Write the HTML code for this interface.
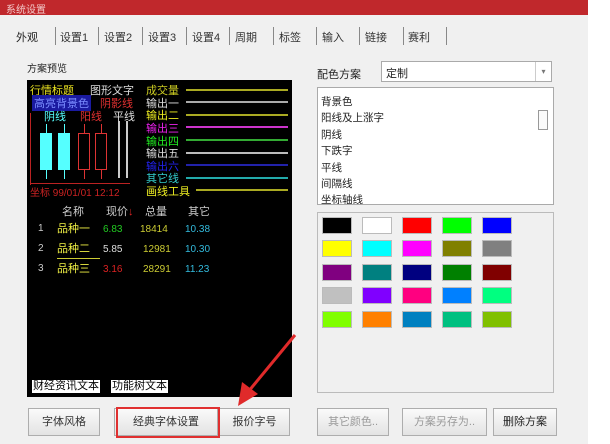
<!DOCTYPE html>
<html><head><meta charset="utf-8"><style>
*{margin:0;padding:0;box-sizing:border-box}
body{width:610px;height:444px;background:#fff;font-family:"Liberation Sans","Noto Sans CJK SC",sans-serif;font-size:11px;position:relative;overflow:hidden;color:#222}
.a{position:absolute;white-space:nowrap}
.win{position:absolute;left:0;top:0;width:588px;height:444px;background:#f0f0f0}
.title{position:absolute;left:0;top:0;width:588px;height:15px;background:#c0282c;color:#f2c8c8;font-size:10px;padding:1px 6px}
.tab{position:absolute;top:29px;font-size:11px;color:#333}
.sep{position:absolute;top:27px;width:1px;height:18px;background:#888}
.blk{position:absolute;left:27px;top:80px;width:265px;height:317px;background:#000}
.btn{position:absolute;height:28px;border:1px solid #adadad;background:linear-gradient(#fafafa,#e3e3e3);text-align:center;line-height:26px;font-size:11px;color:#333}
.sw{position:absolute;width:30px;height:17px;border:1px solid #bbb}
.ln{position:absolute;height:2px}
</style></head><body>
<div class="win"></div>
<div class="title">系统设置</div>
<div class="tab" style="left:16px;color:#222">外观</div>
<div class="sep" style="left:55px"></div><div class="tab" style="left:60px">设置1</div>
<div class="sep" style="left:98px"></div><div class="tab" style="left:104px">设置2</div>
<div class="sep" style="left:142px"></div><div class="tab" style="left:148px">设置3</div>
<div class="sep" style="left:186px"></div><div class="tab" style="left:192px">设置4</div>
<div class="sep" style="left:229px"></div><div class="tab" style="left:235px">周期</div>
<div class="sep" style="left:273px"></div><div class="tab" style="left:279px">标签</div>
<div class="sep" style="left:316px"></div><div class="tab" style="left:322px">输入</div>
<div class="sep" style="left:359px"></div><div class="tab" style="left:365px">链接</div>
<div class="sep" style="left:403px"></div><div class="tab" style="left:408px">赛利</div>
<div class="sep" style="left:446px"></div>
<div class="a" style="left:27px;top:60px;font-size:10px">方案预览</div>
<div class="blk"></div>
<div class="a" style="left:30px;top:82px;color:#e8e020;font-size:11px">行情标题</div>
<div class="a" style="left:90px;top:82px;color:#ddd;font-size:11px">图形文字</div>
<div class="a" style="left:32px;top:95px;color:#7a8cff;background:#1a1aa0;font-size:11px;padding:0 2px">高亮背景色</div>
<div class="a" style="left:100px;top:95px;color:#e03030;font-size:11px">阴影线</div>
<div class="a" style="left:44px;top:108px;color:#5ff;font-size:11px">阴线</div>
<div class="a" style="left:80px;top:108px;color:#e03030;font-size:11px">阳线</div>
<div class="a" style="left:113px;top:108px;color:#ddd;font-size:11px">平线</div>
<div class="a" style="left:30px;top:113px;width:1px;height:72px;background:#b22"></div>
<div class="a" style="left:30px;top:183px;width:100px;height:1px;background:#b22"></div>
<div class="a" style="left:46px;top:124px;width:1px;height:55px;background:#5ff"></div>
<div class="a" style="left:40px;top:133px;width:12px;height:37px;background:#5ff"></div>
<div class="a" style="left:64px;top:124px;width:1px;height:55px;background:#5ff"></div>
<div class="a" style="left:58px;top:133px;width:12px;height:37px;background:#5ff"></div>
<div class="a" style="left:84px;top:124px;width:1px;height:55px;background:#d33"></div>
<div class="a" style="left:78px;top:133px;width:12px;height:37px;border:1px solid #d33;background:#000"></div>
<div class="a" style="left:101px;top:124px;width:1px;height:55px;background:#d33"></div>
<div class="a" style="left:95px;top:133px;width:12px;height:37px;border:1px solid #d33;background:#000"></div>
<div class="a" style="left:118px;top:121px;width:2px;height:57px;background:#ccc"></div>
<div class="a" style="left:126px;top:121px;width:2px;height:57px;background:#ccc"></div>
<div class="a" style="left:30px;top:184px;color:#c22;font-size:10px">坐标 99/01/01 12:12</div>
<div class="a" style="left:146px;top:82px;color:#cc2;font-size:11px">成交量</div><div class="ln" style="left:186px;top:89px;width:102px;background:#aa2"></div>
<div class="a" style="left:146px;top:95px;color:#ddd;font-size:11px">输出一</div><div class="ln" style="left:186px;top:101px;width:102px;background:#aaa"></div>
<div class="a" style="left:146px;top:107px;color:#ee2;font-size:11px">输出二</div><div class="ln" style="left:186px;top:114px;width:102px;background:#aa2"></div>
<div class="a" style="left:146px;top:120px;color:#e2e;font-size:11px">输出三</div><div class="ln" style="left:186px;top:126px;width:102px;background:#c3c"></div>
<div class="a" style="left:146px;top:133px;color:#2e2;font-size:11px">输出四</div><div class="ln" style="left:186px;top:139px;width:102px;background:#3a3"></div>
<div class="a" style="left:146px;top:145px;color:#ddd;font-size:11px">输出五</div><div class="ln" style="left:186px;top:152px;width:102px;background:#bbb"></div>
<div class="a" style="left:146px;top:158px;color:#22e;font-size:11px">输出六</div><div class="ln" style="left:186px;top:164px;width:102px;background:#22a"></div>
<div class="a" style="left:146px;top:170px;color:#3cc;font-size:11px">其它线</div><div class="ln" style="left:186px;top:177px;width:102px;background:#2aa"></div>
<div class="a" style="left:146px;top:183px;color:#ee2;font-size:11px">画线工具</div><div class="ln" style="left:196px;top:189px;width:92px;background:#aa2"></div>
<div class="a" style="left:62px;top:203px;color:#ccc;font-size:11px">名称</div>
<div class="a" style="left:106px;top:203px;color:#ccc;font-size:11px">现价<span style="color:#d22">↓</span></div>
<div class="a" style="left:145px;top:203px;color:#ccc;font-size:11px">总量</div>
<div class="a" style="left:188px;top:203px;color:#ccc;font-size:11px">其它</div>
<div class="a" style="left:38px;top:223px;color:#ccc;font-size:10px">1</div><div class="a" style="left:57px;top:220px;color:#ee4;font-size:11px">品种一</div><div class="a" style="left:103px;top:224px;color:#2c2;font-size:10px">6.83</div><div class="a" style="left:140px;top:224px;color:#cc3;font-size:10px">18414</div><div class="a" style="left:185px;top:224px;color:#3bd;font-size:10px">10.38</div>
<div class="a" style="left:38px;top:243px;color:#ccc;font-size:10px">2</div><div class="a" style="left:57px;top:240px;color:#ee4;font-size:11px">品种二</div><div class="a" style="left:103px;top:244px;color:#ddd;font-size:10px">5.85</div><div class="a" style="left:143px;top:244px;color:#cc3;font-size:10px">12981</div><div class="a" style="left:185px;top:244px;color:#3bd;font-size:10px">10.30</div>
<div class="a" style="left:57px;top:258px;width:43px;height:1px;background:#cc3"></div>
<div class="a" style="left:38px;top:263px;color:#ccc;font-size:10px">3</div><div class="a" style="left:57px;top:260px;color:#ee4;font-size:11px">品种三</div><div class="a" style="left:103px;top:264px;color:#d22;font-size:10px">3.16</div><div class="a" style="left:143px;top:264px;color:#cc3;font-size:10px">28291</div><div class="a" style="left:185px;top:264px;color:#3bd;font-size:10px">11.23</div>
<div class="a" style="left:32px;top:380px;background:#fff;color:#000;font-size:11px;padding:0 1px;line-height:13px">财经资讯文本</div>
<div class="a" style="left:111px;top:380px;background:#fff;color:#000;font-size:11px;padding:0 1px;line-height:13px">功能树文本</div>
<div class="btn" style="left:28px;top:408px;width:72px">字体风格</div>
<div class="btn" style="left:114px;top:408px;width:104px">经典字体设置</div>
<div class="btn" style="left:219px;top:408px;width:71px">报价字号</div>
<div class="a" style="left:116px;top:407px;width:104px;height:31px;border:2px solid #e03030"></div>
<svg class="a" style="left:230px;top:330px" width="70" height="80"><line x1="65" y1="5" x2="18" y2="62" stroke="#e02a2a" stroke-width="3"/><polygon points="8,76 12,52 28,64" fill="#e02a2a"/></svg>
<div class="a" style="left:317px;top:66px;font-size:11px">配色方案</div>
<div class="a" style="left:381px;top:61px;width:171px;height:21px;border:1px solid #aaa;background:#fff;padding:3px 4px;font-size:11px">定制<div class="a" style="right:0;top:0;width:16px;height:19px;border-left:1px solid #ccc;text-align:center;color:#777;font-size:8px;line-height:19px">▾</div></div>
<div class="a" style="left:317px;top:87px;width:237px;height:118px;border:1px solid #aaa;background:#fff;padding:6px 3px;font-size:10.5px;line-height:16.4px;overflow:hidden">背景色<br>阳线及上涨字<br>阴线<br>下跌字<br>平线<br>间隔线<br>坐标轴线<div class="a" style="left:220px;top:22px;width:10px;height:20px;border:1px solid #999;background:#fafafa"></div></div>
<div class="a" style="left:317px;top:212px;width:237px;height:181px;border:1px solid #bbb;background:#f0f0f0"></div>
<div class="sw" style="left:322px;top:217px;background:#000"></div><div class="sw" style="left:362px;top:217px;background:#fff"></div><div class="sw" style="left:402px;top:217px;background:#f00"></div><div class="sw" style="left:442px;top:217px;background:#0f0"></div><div class="sw" style="left:482px;top:217px;background:#00f"></div>
<div class="sw" style="left:322px;top:240px;background:#ff0"></div><div class="sw" style="left:362px;top:240px;background:#0ff"></div><div class="sw" style="left:402px;top:240px;background:#f0f"></div><div class="sw" style="left:442px;top:240px;background:#808000"></div><div class="sw" style="left:482px;top:240px;background:#808080"></div>
<div class="sw" style="left:322px;top:264px;background:#800080"></div><div class="sw" style="left:362px;top:264px;background:#008080"></div><div class="sw" style="left:402px;top:264px;background:#000080"></div><div class="sw" style="left:442px;top:264px;background:#008000"></div><div class="sw" style="left:482px;top:264px;background:#800000"></div>
<div class="sw" style="left:322px;top:287px;background:#c0c0c0"></div><div class="sw" style="left:362px;top:287px;background:#8000ff"></div><div class="sw" style="left:402px;top:287px;background:#ff0080"></div><div class="sw" style="left:442px;top:287px;background:#0080ff"></div><div class="sw" style="left:482px;top:287px;background:#00ff80"></div>
<div class="sw" style="left:322px;top:311px;background:#80ff00"></div><div class="sw" style="left:362px;top:311px;background:#ff8000"></div><div class="sw" style="left:402px;top:311px;background:#0080c0"></div><div class="sw" style="left:442px;top:311px;background:#00c080"></div><div class="sw" style="left:482px;top:311px;background:#80c000"></div>
<div class="btn" style="left:317px;top:408px;width:72px;color:#999">其它颜色..</div>
<div class="btn" style="left:402px;top:408px;width:85px;color:#999">方案另存为..</div>
<div class="btn" style="left:493px;top:408px;width:64px;color:#222">删除方案</div>
</body></html>
